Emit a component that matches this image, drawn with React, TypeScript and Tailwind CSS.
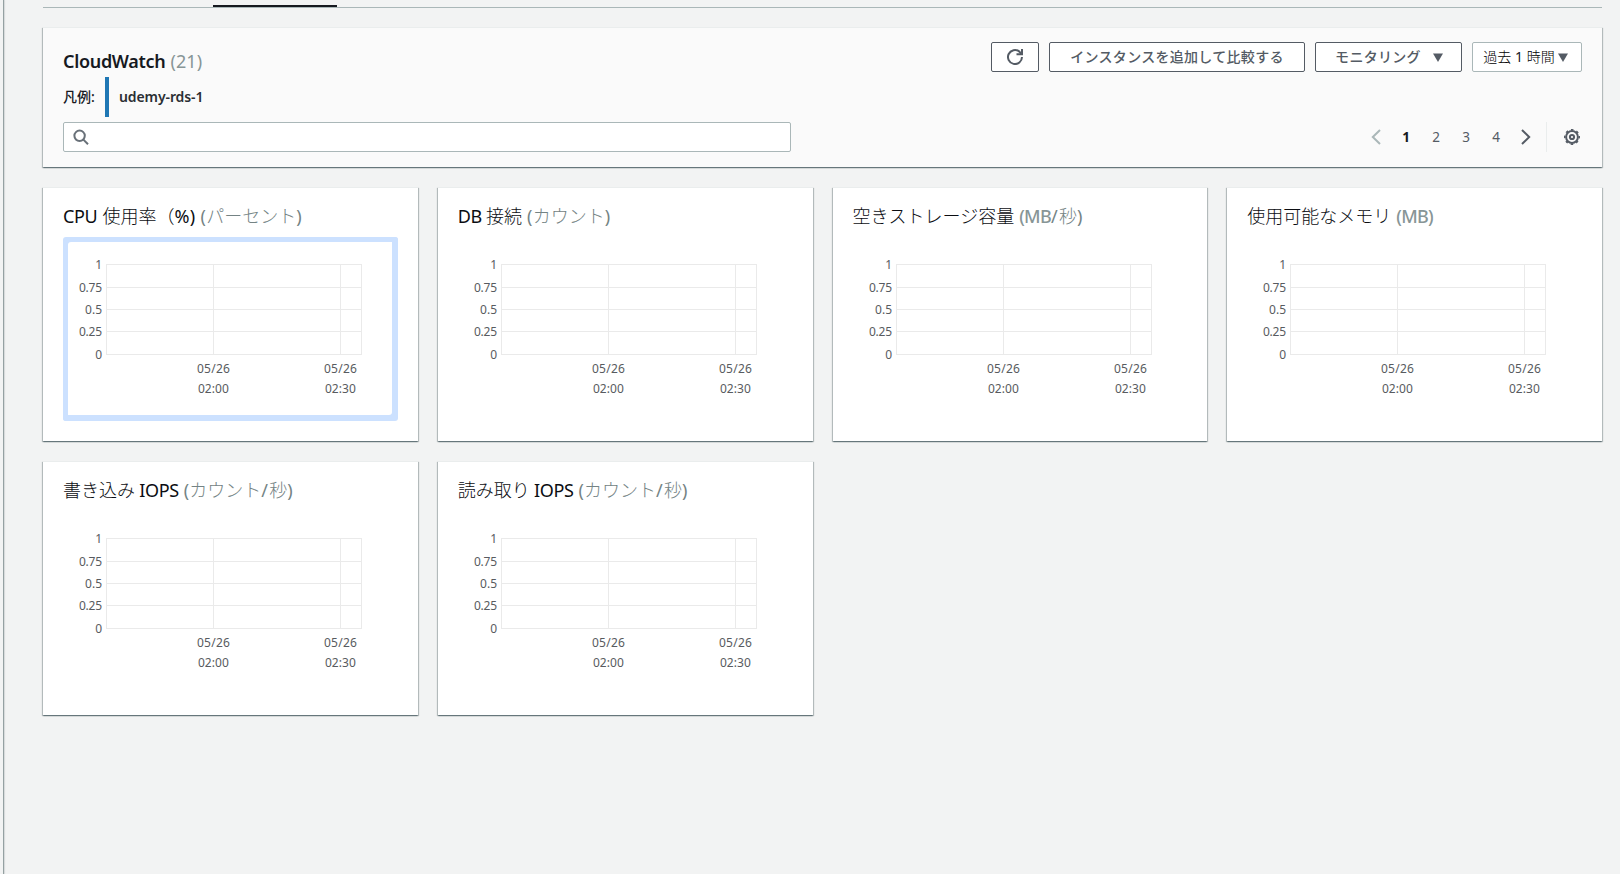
import React from "react";

const metrics = [
  { name: <><L>CPU </L><span className="ml-px">使用率（</span><P>%)</P></>, unit: <><P>(</P>パーセント<P>)</P></>, focused: true },
  { name: <><L>DB </L>接続</>, unit: <><P>(</P>カウント<P>)</P></> },
  { name: <>空きストレージ容量</>, unit: <><B>(MB</B><S />秒<P>)</P></> },
  { name: <>使用可能なメモリ</>, unit: <B>(MB)</B> },
  { name: <>書き込み<L> IOPS</L></>, unit: <><P>(</P>カウント<S />秒<P>)</P></> },
  { name: <>読み取り<L> IOPS</L></>, unit: <><P>(</P>カウント<S />秒<P>)</P></> },
];

function L({ children }: { children: React.ReactNode }) {
  return <span className="font-normal tracking-[-0.4px]">{children}</span>;
}

function P({ children }: { children: React.ReactNode }) {
  return <span className="font-normal tracking-[0.3px]">{children}</span>;
}

function S() {
  return <span className="font-normal tracking-[1.3px]">/</span>;
}

function B({ children }: { children: React.ReactNode }) {
  return <span className="font-medium tracking-[-0.7px] text-[#879596]">{children}</span>;
}

const yTicks = [
  { y: 27, label: "1", w: 5 },
  { y: 50, label: "0.75", w: 23 },
  { y: 72, label: "0.5", w: 17 },
  { y: 94, label: "0.25", w: 23 },
  { y: 117, label: "0", w: 7 },
];

function Chart() {
  return (
    <svg width="335" height="184" className="block" fontSize="12" fill="#585b60">
      <g fill="#eaeaea" shapeRendering="crispEdges">
        {yTicks.map((t) => (
          <rect key={t.y} x="43" y={t.y} width="256" height="1" />
        ))}
        {[43, 150, 277, 298].map((x) => (
          <rect key={x} x={x} y="27" width="1" height="91" />
        ))}
      </g>
      {yTicks.map((t) => (
        <text key={t.label} x="39" y={t.y + 5} textAnchor="end" textLength={t.w}>
          {t.label}
        </text>
      ))}
      {[{ x: 150.4, t: "02:00" }, { x: 277.4, t: "02:30" }].map((c) => (
        <g key={c.t} textAnchor="middle">
          <text x={c.x} y="136" textLength="33">05/26</text>
          <text x={c.x} y="156" textLength="31">{c.t}</text>
        </g>
      ))}
    </svg>
  );
}

const panel =
  "border-t border-[#eaeded] shadow-[0_1px_1px_0_rgba(0,28,36,0.3),1px_1px_1px_0_rgba(0,28,36,0.22),-1px_1px_1px_0_rgba(0,28,36,0.22)]";

function Caret() {
  return (
    <svg width="10" height="9" viewBox="0 0 10 9" className="shrink-0">
      <path d="M0 0.5H10L5 9Z" fill="#545b64" />
    </svg>
  );
}

export default function App() {
  return (
    <div
      lang="ja"
      className="flex h-[874px] w-[1620px] overflow-hidden bg-[#f2f3f3] font-['Noto_Sans','Noto_Sans_CJK_JP',sans-serif] text-[#16191f]"
    >
      <div className="w-1 shrink-0 border-r border-[#95a1a2] shadow-[1px_0_1px_rgba(0,28,36,0.12)]" />
      <main className="ml-[39px] w-[1559px] shrink-0">
        <div className="flex h-2 items-end border-b border-[#aab7b8]">
          <div className="ml-[170px] h-[2px] w-[124px] bg-[#16191f]" />
        </div>

        <section className={`mt-[19px] flex h-[140px] flex-col bg-[#fafafa] px-5 ${panel}`}>
          <div className="flex h-[94px] justify-between">
            <div className="pt-[22px]">
              <h2 className="h-[27px] whitespace-pre text-[18px] leading-[22px]">
                <span className="font-semibold tracking-[-0.32px]">CloudWatch</span>
                <span className="ml-[5px] tracking-[0.1px] text-[#879596]">(21)</span>
              </h2>
              <div className="flex h-10 items-center text-sm">
                <span className="w-[42px] whitespace-nowrap font-medium leading-5">凡例:</span>
                <span className="h-10 w-1 bg-[#1f77b4]" />
                <span className="ml-[10px] font-semibold leading-5 tracking-[-0.1px] text-[#2a2e33]">udemy-rds-1</span>
              </div>
            </div>
            <div className="mt-[14px] flex h-[30px] text-sm font-medium leading-5 text-[#545b64]">
              <button className="mr-[10px] flex w-12 items-center justify-center rounded-[2px] border border-[#545b64] bg-white">
                <svg width="16" height="16" viewBox="0 0 16 16" fill="none" stroke="#545b64" strokeWidth="2">
                  <path d="M15 8a7 7 0 1 1-2.6-5.4L14.5 5" />
                  <path d="M15 0v5.2h-5.5" />
                </svg>
              </button>
              <button className="mr-[10px] flex w-64 items-center justify-center whitespace-nowrap rounded-[2px] border border-[#545b64] bg-white tracking-[0.3px]">
                インスタンスを追加して比較する
              </button>
              <button className="mr-[10px] flex w-[147px] items-center justify-center gap-[12px] whitespace-nowrap rounded-[2px] border border-[#545b64] bg-white pl-px tracking-[0.3px]">
                モニタリング
                <Caret />
              </button>
              <button className="flex w-[110px] items-center gap-[3px] whitespace-pre rounded-[2px] border border-[#aab7b8] bg-white pl-[10px] font-normal text-[#16191f]">
                <span className="w-[72px] font-light text-black">過去 <span className="font-normal text-[#16191f]">1</span> 時間</span>
                <Caret />
              </button>
            </div>
          </div>
          <div className="flex h-[30px] justify-between">
            <div className="flex w-[728px] items-center rounded-[2px] border border-[#aab7b8] bg-white pl-[9px]">
              <svg width="16" height="16" viewBox="0 0 16 16" fill="none" stroke="#687078" strokeWidth="2">
                <circle cx="6.6" cy="6.8" r="5.2" />
                <path d="M10.4 10.6L15 15.2" />
              </svg>
            </div>
            <div className="flex items-center text-sm leading-5 text-[#545b64]">
              <svg width="10" height="16" viewBox="0 0 10 16" fill="none" stroke="#aab7b8" strokeWidth="2" className="mr-[10px]">
                <path d="M9 1L1.8 8L9 15" />
              </svg>
              <span className="w-[30px] text-center text-[13.5px] font-bold text-[#16191f]">1</span>
              <span className="w-[30px] text-center text-[13.5px]">2</span>
              <span className="w-[30px] text-center text-[13.5px]">3</span>
              <span className="w-[30px] text-center text-[13.5px]">4</span>
              <svg width="10" height="16" viewBox="0 0 10 16" fill="none" stroke="#545b64" strokeWidth="2" className="ml-[10px] mr-[15px]">
                <path d="M1 1L8.2 8L1 15" />
              </svg>
              <span className="mr-[17px] h-[30px] w-px bg-[#eaeded]" />
              <svg width="16" height="16" viewBox="0 0 16 16" fill="none" stroke="#545b64" className="mr-[2px]">
                <circle cx="8" cy="8" r="5.9" strokeWidth="2" />
                <circle cx="8" cy="8" r="7.3" strokeWidth="1.4" strokeDasharray="2.6 3.133" strokeDashoffset="1.3" />
                <circle cx="8" cy="8" r="2.1" strokeWidth="2" />
              </svg>
            </div>
          </div>
        </section>

        <div className="mt-5 grid grid-cols-4 gap-5">
          {metrics.map((m, i) => (
            <section key={i} className={`h-[254px] bg-white px-5 ${panel}`}>
              <h3 className="mt-[17px] h-8 whitespace-pre text-[18px] font-light leading-[22px] text-[#0b0d12]">
                {m.name}
                <span className="ml-[5px] text-[#748384]">{m.unit}</span>
              </h3>
              <div
                className={
                  m.focused
                    ? "h-[184px] w-[335px] rounded-[3px] shadow-[inset_5px_5px_0_#cce1ff,inset_-6px_-6px_0_#cce1ff]"
                    : "h-[184px] w-[335px]"
                }
              >
                <Chart />
              </div>
            </section>
          ))}
        </div>
      </main>
    </div>
  );
}
